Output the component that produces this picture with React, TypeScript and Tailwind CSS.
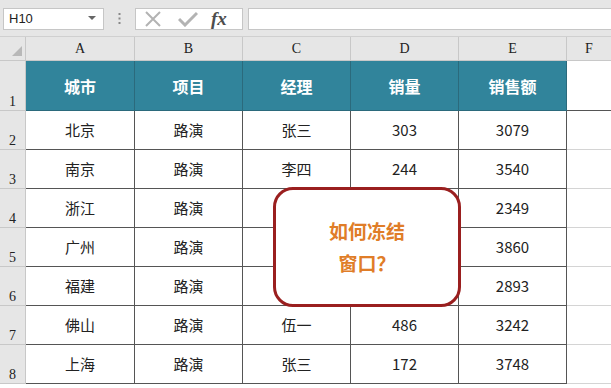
const cols = ['A', 'B', 'C', 'D', 'E'];
const widths = ['w-[109px]', 'w-[108px]', 'w-[108px]', 'w-[108px]', 'w-[108px]'];
const headers = ['城市', '项目', '经理', '销量', '销售额'];

const rows = [
  ['北京', '路演', '张三', '303', '3079'],
  ['南京', '路演', '李四', '244', '3540'],
  ['浙江', '路演', '', '', '2349'],
  ['广州', '路演', '', '', '3860'],
  ['福建', '路演', '', '', '2893'],
  ['佛山', '路演', '伍一', '486', '3242'],
  ['上海', '路演', '张三', '172', '3748'],
];

const cellFont = { fontFamily: '"Noto Sans CJK SC", "Liberation Sans", sans-serif' };
const headFont = { fontFamily: '"Liberation Serif", "DejaVu Serif", serif' };

function Toolbar() {
  return (
    <div className="h-[37px] bg-[#e6e6e6] flex items-center pt-[1px] border-b border-[#d0d0d0]">
      <div className="ml-[3px] w-[101px] h-[22px] bg-white border border-[#c6c6c6] flex items-center justify-between px-[5px]">
        <span className="text-[13px] text-[#222]" style={{ fontFamily: '"Liberation Sans", sans-serif' }}>H10</span>
        <svg width="8" height="5" viewBox="0 0 8 5" className="mr-[2px]">
          <path d="M0 0 L8 0 L4 4 Z" fill="#666" />
        </svg>
      </div>
      <div className="w-[31px] flex justify-center">
        <svg width="3" height="11" viewBox="0 0 3 11">
          <rect x="0.5" y="0" width="2" height="2" fill="#888" />
          <rect x="0.5" y="4.5" width="2" height="2" fill="#888" />
          <rect x="0.5" y="9" width="2" height="2" fill="#888" />
        </svg>
      </div>
      <div className="w-[108px] h-[22px] bg-white border border-[#c6c6c6] flex items-center">
        <svg width="18" height="16" viewBox="0 0 18 16" className="ml-[8px]">
          <path d="M2 1 L16 15 M16 1 L2 15" stroke="#b3b3b3" strokeWidth="2" />
        </svg>
        <svg width="20" height="16" viewBox="0 0 20 16" className="ml-[16px]">
          <path d="M1 8 L7 14 L19 2" stroke="#b3b3b3" strokeWidth="3" fill="none" />
        </svg>
        <span
          className="ml-[13px] text-[19px] italic font-bold text-[#4d4d4d] leading-none"
          style={{ fontFamily: '"Liberation Serif", serif' }}
        >
          fx
        </span>
      </div>
      <div className="ml-[5px] flex-1 h-[22px] bg-white border-y border-l border-[#c6c6c6]" />
    </div>
  );
}

function ColumnHeader() {
  return (
    <div className="flex h-[24px] bg-[#e6e6e6] border-b border-[#c8c8c8] text-[14px] text-[#222]" style={headFont}>
      <div className="w-[26px] relative border-r border-[#c8c8c8]">
        <svg width="10" height="10" viewBox="0 0 10 10" className="absolute right-[3px] bottom-[4px]">
          <path d="M10 0 L10 10 L0 10 Z" fill="#b8b8b8" />
        </svg>
      </div>
      {cols.map((c, i) => (
        <div key={c} className={`${widths[i]} flex items-center justify-center border-r border-[#c8c8c8]`}>
          {c}
        </div>
      ))}
      <div className="flex-1 flex items-center justify-center">F</div>
    </div>
  );
}

function RowNum({ n, h }: { n: number; h: string }) {
  return (
    <div
      className={`w-[26px] ${h} bg-[#e6e6e6] border-r border-b border-[#c8c8c8] flex items-end pl-[9px] pb-[1px] text-[14px] text-[#222] leading-none`}
      style={headFont}
    >
      {n}
    </div>
  );
}

export default function App() {
  return (
    <div className="w-[611px] h-[388px] overflow-hidden bg-white relative">
      <Toolbar />
      <ColumnHeader />

      <div className="flex">
        <RowNum n={1} h="h-[50px]" />
        {headers.map((t, i) => (
          <div
            key={t}
            className={`${widths[i]} h-[50px] bg-[#31849b] border-r border-b border-[#2b6a7c] flex items-center justify-center text-white font-bold text-[16px]`}
            style={cellFont}
          >
            {t}
          </div>
        ))}
        <div className="flex-1 h-[50px] border-b border-[#555]" />
      </div>

      {rows.map((r, ri) => (
        <div key={ri} className="flex">
          <RowNum n={ri + 2} h="h-[39px]" />
          {r.map((v, ci) => (
            <div
              key={ci}
              className={`${widths[ci]} h-[39px] border-r border-b border-[#555] flex items-center justify-center text-[15px] text-[#222]`}
              style={cellFont}
            >
              {v}
            </div>
          ))}
          <div className="flex-1 h-[39px] border-b border-[#d4d4d4]" />
        </div>
      ))}

      <div className="absolute left-[273px] top-[187px] w-[188px] h-[120px] bg-white border-[3px] border-[#9a1f1f] rounded-[20px] flex flex-col items-center justify-center">
        <div className="text-[19px] font-bold text-[#e07d28] leading-[32px]" style={cellFont}>如何冻结</div>
        <div className="text-[19px] font-bold text-[#e07d28] leading-[32px]" style={cellFont}>窗口？</div>
      </div>
    </div>
  );
}
